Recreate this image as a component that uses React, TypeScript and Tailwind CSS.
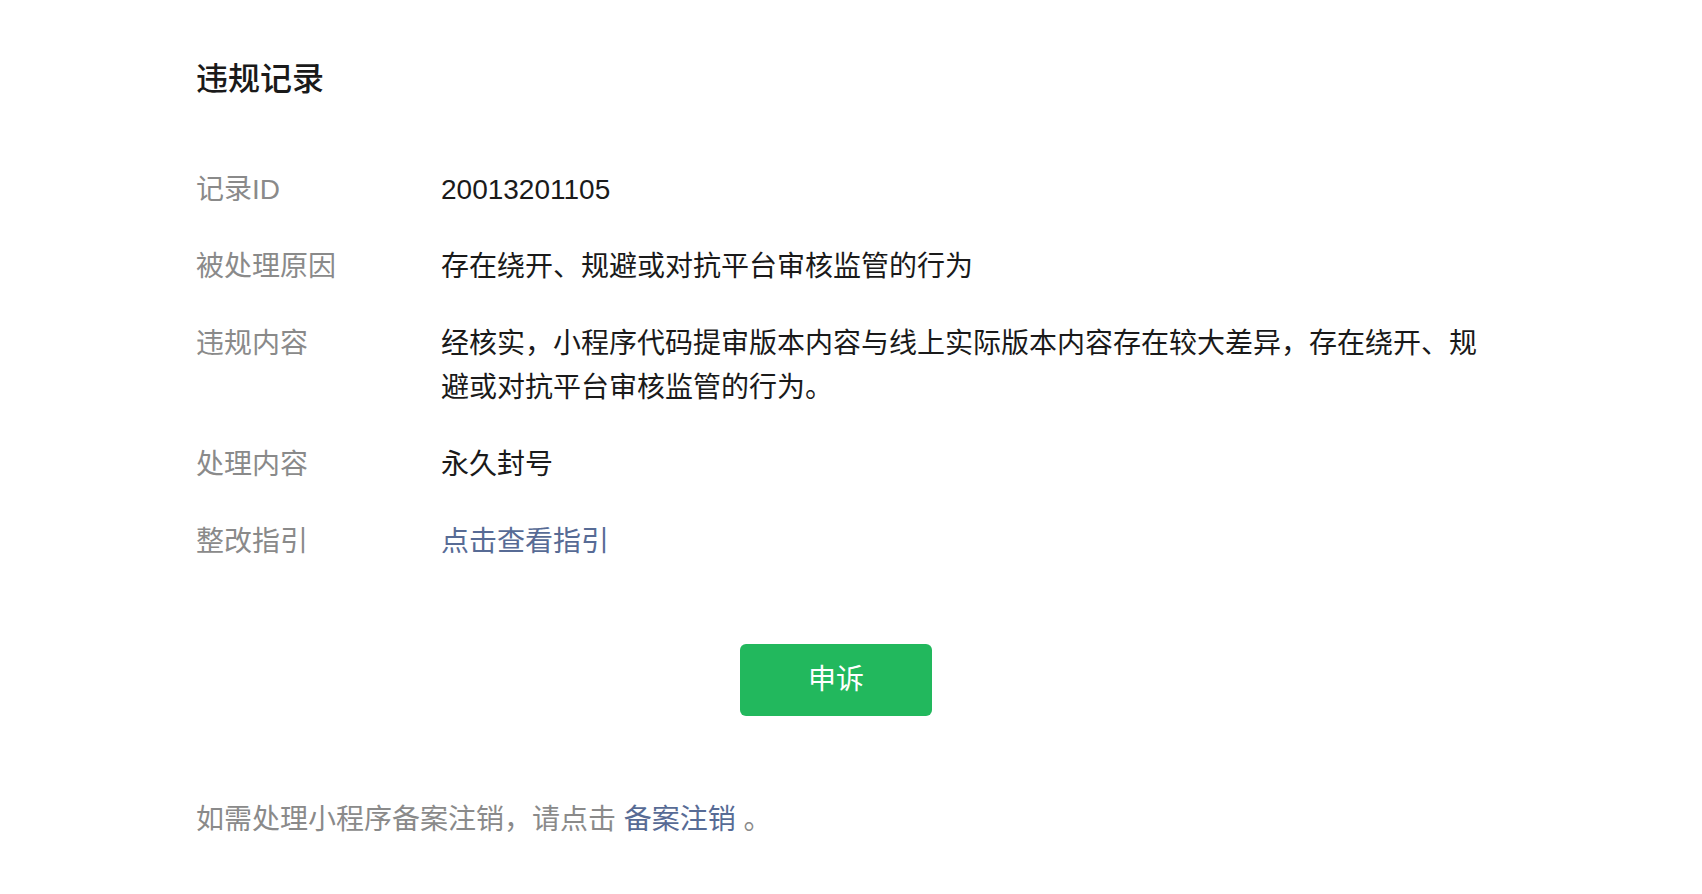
import React from "react";

const rows: { label: string; value: React.ReactNode }[] = [
  { label: "记录ID", value: "20013201105" },
  { label: "被处理原因", value: "存在绕开、规避或对抗平台审核监管的行为" },
  {
    label: "违规内容",
    value:
      "经核实，小程序代码提审版本内容与线上实际版本内容存在较大差异，存在绕开、规避或对抗平台审核监管的行为。",
  },
  { label: "处理内容", value: "永久封号" },
  {
    label: "整改指引",
    value: (
      <a href="#" className="text-[#576b95]">
        点击查看指引
      </a>
    ),
  },
];

export default function App() {
  return (
    <div
      className="min-h-screen bg-white"
      style={{ fontFamily: '"Liberation Sans", "Noto Sans CJK SC", sans-serif' }}
    >
      <div className="ml-[196px] w-[1280px] pt-[57px] pb-[40px]">
        <h2 className="text-[32px] leading-[44px] font-medium text-[#1a1a1a]">
          违规记录
        </h2>

        {/* record details */}
        <div className="mt-[67px] flex flex-col gap-[33px]">
          {rows.map((r) => (
            <div key={r.label} className="flex w-[1310px] text-[28px] leading-[44px]">
              <div className="w-[245px] shrink-0 text-[#8a8a8a]">{r.label}</div>
              <div className="w-[1040px] shrink-0 text-[#1a1a1a]">{r.value}</div>
            </div>
          ))}
        </div>

        <div className="mt-[80px] flex justify-center">
          <button className="w-[192px] h-[72px] rounded-[6px] bg-[#22b85d] text-white text-[28px]">
            申诉
          </button>
        </div>

        <p className="mt-[82px] text-[28px] leading-[44px] text-[#8a8a8a]">
          如需处理小程序备案注销，请点击{" "}
          <a href="#" className="text-[#576b95]">
            备案注销
          </a>{" "}
          。
        </p>
      </div>
    </div>
  );
}
